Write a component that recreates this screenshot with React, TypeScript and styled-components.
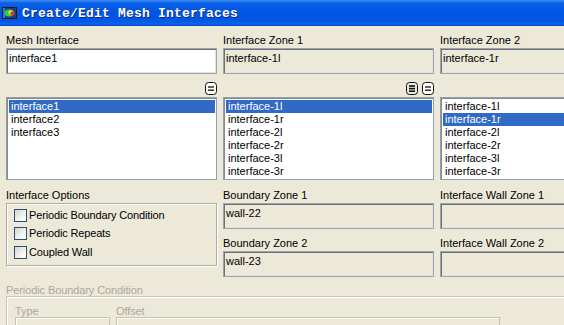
import styled, { createGlobalStyle } from 'styled-components';

const GlobalStyle = createGlobalStyle`
  html, body {
    margin: 0;
    padding: 0;
    background: #ece9d8;
  }
  body {
    font-family: 'Liberation Sans', Arial, sans-serif;
    font-size: 11px;
    color: #000;
  }
`;

const Window = styled.div`
  width: 564px;
  height: 325px;
  overflow: hidden;
  background: #ece9d8;
`;

const TitleBar = styled.div`
  height: 26px;
  display: flex;
  align-items: center;
  gap: 5px;
  padding-left: 2px;
  background: linear-gradient(
    to bottom,
    #3f8ff5 0%,
    #0b62e8 12%,
    #0055e3 45%,
    #0057e6 82%,
    #0b63ee 92%,
    #0848c8 100%
  );
`;

const Title = styled.span`
  font-family: 'Liberation Mono', 'Courier New', monospace;
  font-weight: bold;
  font-size: 13px;
  letter-spacing: 0.2px;
  color: #fff;
  text-shadow: 1px 1px 0 #0a2a80;
`;

const Body = styled.div`
  padding: 8px 0 0 6px;
  display: flex;
  flex-direction: column;
`;

const Row = styled.div<{ $mt?: number }>`
  display: grid;
  grid-template-columns: 211px 211px 211px;
  column-gap: 6px;
  align-items: start;
  margin-top: ${(p) => p.$mt ?? 0}px;
`;

const Column = styled.div`
  display: flex;
  flex-direction: column;
`;

const Label = styled.div<{ $mt?: number }>`
  line-height: 13px;
  height: 13px;
  margin-bottom: 1px;
  margin-top: ${(p) => p.$mt ?? 0}px;
  white-space: nowrap;
`;

const Field = styled.div<{ $editable?: boolean }>`
  height: 26px;
  box-sizing: border-box;
  border: 1px solid #97a5b4;
  box-shadow: inset 1px 1px 0 #707070, inset -1px -1px 0 #e4e2d6;
  background: ${(p) => (p.$editable ? '#fff' : '#ece9d8')};
  padding: 3px 2px;
  line-height: 13px;
  white-space: nowrap;
  overflow: hidden;
`;

const ButtonBar = styled.div`
  height: 13px;
  display: flex;
  justify-content: flex-end;
  gap: 4px;
  margin-bottom: 2px;
`;

const SmallButton = styled.span`
  display: block;
  width: 12px;
  height: 13px;
  svg {
    display: block;
  }
`;

const ListBox = styled.div`
  height: 83px;
  box-sizing: border-box;
  border: 1px solid #8fa0b2;
  box-shadow: inset 1px 1px 0 #8a8a8a;
  background: #fff;
  padding: 2px 1px 1px 2px;
  overflow: hidden;
`;

const ListItem = styled.div<{ $selected?: boolean }>`
  height: 13px;
  line-height: 13px;
  padding-left: 2px;
  white-space: nowrap;
  background: ${(p) => (p.$selected ? '#316ac5' : 'transparent')};
  color: ${(p) => (p.$selected ? '#fff' : '#000')};
`;

const GroupBox = styled.div`
  height: 63px;
  box-sizing: border-box;
  border: 1px solid #aeac9f;
  box-shadow: inset 1px 1px 0 #fff, 1px 1px 0 #fff;
  padding: 5px 0 0 7px;
  display: flex;
  flex-direction: column;
  gap: 5.4px;
`;

const CheckRow = styled.label`
  display: flex;
  align-items: center;
  gap: 2px;
  height: 13px;
  line-height: 13px;
  letter-spacing: -0.15px;
  white-space: nowrap;
`;

const CheckBox = styled.span`
  display: block;
  width: 13px;
  height: 13px;
  box-sizing: border-box;
  border: 1px solid #2a4f78;
  background: linear-gradient(135deg, #d6d5cc 0%, #f2f2ee 60%, #fff 100%);
`;

const DisabledLabel = styled.div<{ $lh?: number }>`
  color: #aca899;
  line-height: ${(p) => p.$lh ?? 12}px;
  height: ${(p) => p.$lh ?? 12}px;
  letter-spacing: -0.1px;
  white-space: nowrap;
`;

const DisabledGroup = styled.div`
  width: 620px;
  height: 60px;
  box-sizing: border-box;
  border: 1px solid #cac7b8;
  box-shadow: inset 1px 1px 0 #fff;
  padding: 9px 0 0 8px;
  display: grid;
  grid-template-columns: 95px 384px;
  column-gap: 6px;
  align-content: start;
`;

const DisabledBox = styled.div`
  height: 24px;
  box-sizing: border-box;
  border: 1px solid #c5c3b5;
  box-shadow: inset 1px 1px 0 #fbfbf8;
`;

const AppIcon = () => (
  <svg width="15" height="12" viewBox="0 0 15 12" style={{ display: 'block' }}>
    <rect x="0" y="0" width="15" height="12" fill="#1a1a1a" />
    <rect x="1" y="1" width="13" height="10" fill="#1c3f8c" />
    <ellipse cx="7" cy="6" rx="4.5" ry="3.5" fill="#2fcf3a" />
    <ellipse cx="9" cy="5.5" rx="2.6" ry="2.2" fill="#e8e030" />
    <ellipse cx="10.5" cy="6.5" rx="2.2" ry="2" fill="#e2361e" />
    <rect x="1" y="1" width="2" height="10" fill="#2a7fe0" />
  </svg>
);

const EqualIcon = () => (
  <svg width="12" height="13" viewBox="0 0 12 13">
    <rect x="0.5" y="0.5" width="11" height="12" rx="3" fill="#fbfbf9" stroke="#111" />
    <line x1="3" y1="5" x2="9" y2="5" stroke="#111" strokeWidth="1.3" />
    <line x1="3" y1="8.2" x2="9" y2="8.2" stroke="#111" strokeWidth="1.3" />
  </svg>
);

const AllIcon = () => (
  <svg width="12" height="13" viewBox="0 0 12 13">
    <rect x="0.5" y="0.5" width="11" height="12" rx="3" fill="#e8e8e4" stroke="#111" />
    <rect x="3" y="3.2" width="6" height="1.6" fill="#111" />
    <rect x="3" y="5.8" width="6" height="1.6" fill="#111" />
    <rect x="3" y="8.4" width="6" height="1.6" fill="#111" />
  </svg>
);

const meshInterfaces = ['interface1', 'interface2', 'interface3'];
const zones = [
  'interface-1l',
  'interface-1r',
  'interface-2l',
  'interface-2r',
  'interface-3l',
  'interface-3r',
];
const options = ['Periodic Boundary Condition', 'Periodic Repeats', 'Coupled Wall'];

export default function App() {
  return (
    <Window>
      <GlobalStyle />
      <TitleBar>
        <AppIcon />
        <Title>Create/Edit Mesh Interfaces</Title>
      </TitleBar>
      <Body>
        <Row>
          <Column>
            <Label>Mesh Interface</Label>
            <Field $editable>interface1</Field>
          </Column>
          <Column>
            <Label>Interface Zone 1</Label>
            <Field>interface-1l</Field>
          </Column>
          <Column>
            <Label>Interface Zone 2</Label>
            <Field>interface-1r</Field>
          </Column>
        </Row>

        <Row $mt={8}>
          <Column>
            <ButtonBar>
              <SmallButton>
                <EqualIcon />
              </SmallButton>
            </ButtonBar>
            <ListBox>
              {meshInterfaces.map((name, i) => (
                <ListItem key={name} $selected={i === 0}>
                  {name}
                </ListItem>
              ))}
            </ListBox>
          </Column>
          <Column>
            <ButtonBar>
              <SmallButton>
                <AllIcon />
              </SmallButton>
              <SmallButton>
                <EqualIcon />
              </SmallButton>
            </ButtonBar>
            <ListBox>
              {zones.map((name, i) => (
                <ListItem key={name} $selected={i === 0}>
                  {name}
                </ListItem>
              ))}
            </ListBox>
          </Column>
          <Column>
            <ButtonBar />
            <ListBox>
              {zones.map((name, i) => (
                <ListItem key={name} $selected={i === 1}>
                  {name}
                </ListItem>
              ))}
            </ListBox>
          </Column>
        </Row>

        <Row $mt={9}>
          <Column>
            <Label>Interface Options</Label>
            <GroupBox>
              {options.map((opt) => (
                <CheckRow key={opt}>
                  <CheckBox />
                  {opt}
                </CheckRow>
              ))}
            </GroupBox>
          </Column>
          <Column>
            <Label>Boundary Zone 1</Label>
            <Field>wall-22</Field>
            <Label $mt={8}>Boundary Zone 2</Label>
            <Field>wall-23</Field>
          </Column>
          <Column>
            <Label>Interface Wall Zone 1</Label>
            <Field />
            <Label $mt={8}>Interface Wall Zone 2</Label>
            <Field />
          </Column>
        </Row>

        <Column style={{ marginTop: 7 }}>
          <DisabledLabel>Periodic Boundary Condition</DisabledLabel>
          <DisabledGroup>
            <Column>
              <DisabledLabel $lh={11}>Type</DisabledLabel>
              <DisabledBox />
            </Column>
            <Column>
              <DisabledLabel $lh={11}>Offset</DisabledLabel>
              <DisabledBox />
            </Column>
          </DisabledGroup>
        </Column>
      </Body>
    </Window>
  );
}
